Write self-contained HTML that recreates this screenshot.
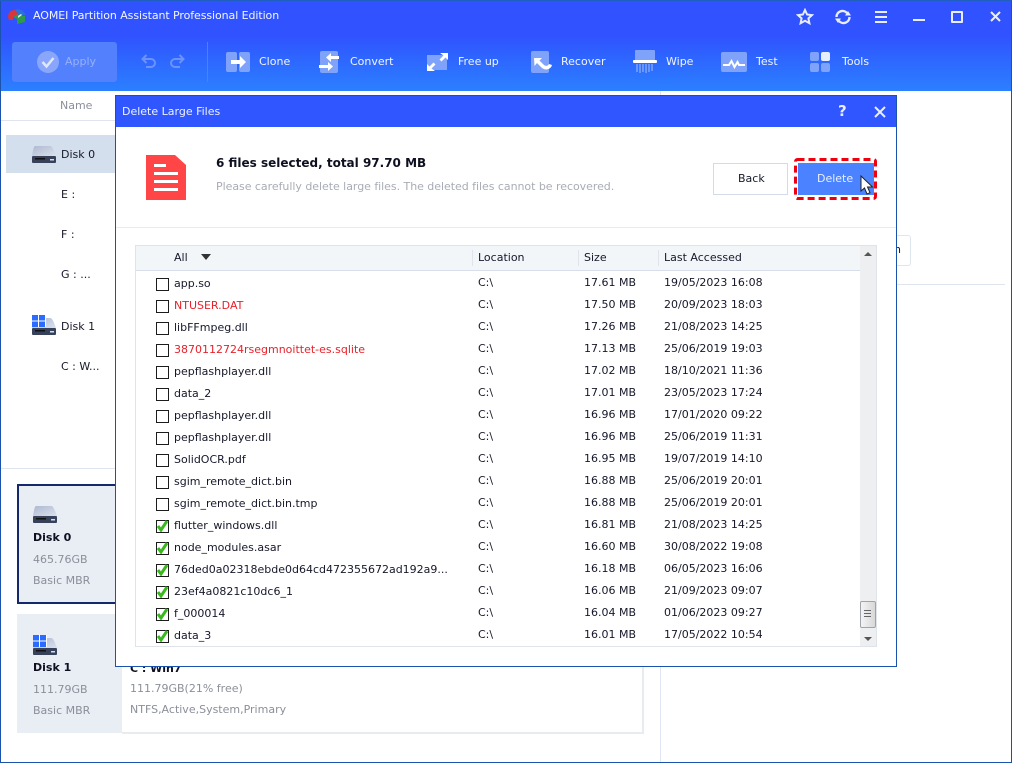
<!DOCTYPE html>
<html><head><meta charset="utf-8"><style>
html,body{margin:0;padding:0;background:#fff}
#w{position:relative;width:1012px;height:763px;overflow:hidden;background:#fff;font-family:"DejaVu Sans","Liberation Sans",sans-serif;font-size:11px;color:#16182a}
#w div,#w svg,#w span.a{position:absolute}
.t{white-space:nowrap;line-height:14px}
.tb{color:#f0f5ff;font-size:11px}
.r{left:136px;width:724px;height:22px}
.r .cb{left:20px;top:6px;width:11px;height:11px;border:1px solid #1c1c1c;background:#fff}
.r svg{left:20px;top:4px}
.r .n,.r .l,.r .s,.r .d{top:4px;white-space:nowrap;line-height:14px;font-size:11px}
.r .n{left:38px;top:5px}.r .l{left:342px}.r .s{left:448px}.r .d{left:528px}
.red{color:#e8212a}
.g{color:#8b8f99;font-size:11px}
</style></head><body><div id="w">
<!-- title bar -->
<div style="left:0;top:0;width:1012px;height:91px;background:linear-gradient(#3052ff 0,#3052ff 35px,#2b80ff 91px)"></div>
<svg style="left:7px;top:8px" width="20" height="17" viewBox="0 0 20 17"><path d="M1 9C1 5 4 2 8 2l3 4-5 3v3H2z" fill="#d9353a"/><path d="M8 2c2-1 6-1 8 1l3 4-6 1-2-2z" fill="#2a72d8"/><path d="M11 6l2 2h5v6l-8 2v-5l-4-2z" fill="#2e9a4c"/><path d="M11 8l3-2 1 1-4 3z" fill="#d8f0e0"/></svg>
<div class="t" style="left:33px;top:9px;color:#f2f6ff;font-size:11px;letter-spacing:-.08px">AOMEI Partition Assistant Professional Edition</div>
<!-- window controls -->
<svg style="left:796px;top:8px" width="18" height="18" viewBox="0 0 18 18"><path d="M9 2l2.100 4.500 4.900.6-3.600 3.300 1 4.800L9 12.800 4.600 15.200l1-4.800L2 7.100l4.900-.6z" fill="none" stroke="#e8eeff" stroke-width="2"/></svg>
<svg style="left:834px;top:8px" width="18" height="18" viewBox="0 0 18 18"><path d="M2.500 9A6 6 0 0 1 13 5M15.500 9A6 6 0 0 1 5 13" fill="none" stroke="#e8eeff" stroke-width="2.400"/><path d="M11 7.500h6L14 3zM7 10.500H1L4 15z" fill="#e8eeff"/></svg>
<div style="left:875px;top:11px;width:12px;height:2px;background:#e8eeff"></div>
<div style="left:875px;top:16px;width:12px;height:2px;background:#e8eeff"></div>
<div style="left:875px;top:21px;width:12px;height:2px;background:#e8eeff"></div>
<div style="left:913px;top:19px;width:12px;height:2px;background:#e8eeff"></div>
<div style="left:951px;top:11px;width:8px;height:8px;border:2px solid #e8eeff;border-radius:1px"></div>
<svg style="left:989px;top:10px" width="13" height="13" viewBox="0 0 13 13"><path d="M2 2l9 9M11 2l-9 9" stroke="#e8eeff" stroke-width="2"/></svg>
<!-- toolbar -->
<div style="left:12px;top:42px;width:105px;height:40px;border-radius:3px;background:#5380fc"></div>
<svg style="left:37px;top:51px" width="22" height="22" viewBox="0 0 22 22"><circle cx="11" cy="11" r="11" fill="#8aa6fb"/><path d="M5.500 11l4 4.500 7-8.500" fill="none" stroke="#dfe7ff" stroke-width="2.500"/></svg>
<div class="t" style="left:65px;top:55px;color:#98b0fc;font-size:11px">Apply</div>
<svg style="left:141px;top:54px" width="44" height="15" viewBox="0 0 44 15"><path d="M2 5h8a4 4 0 0 1 0 8H5M5.500 1L1.500 5l4 4" fill="none" stroke="#6d92fb" stroke-width="2"/><path d="M42 5h-8a4 4 0 0 0 0 8h5M38.500 1l4 4-4 4" fill="none" stroke="#6d92fb" stroke-width="2"/></svg>
<div style="left:207px;top:42px;width:1px;height:40px;background:#4f80fb"></div>
<!-- clone -->
<svg style="left:226px;top:51px" width="25" height="22" viewBox="0 0 25 22"><rect x="0" y="1" width="11" height="20" rx="2" fill="#7fa3fb"/><rect x="13" y="1" width="11" height="20" rx="2" fill="#7fa3fb"/><path d="M5 9h9V5l6 6-6 6v-4H5z" fill="#fff"/></svg>
<div class="t tb" style="left:259px;top:55px">Clone</div>
<!-- convert -->
<svg style="left:319px;top:50px" width="21" height="24" viewBox="0 0 21 24"><rect x="1" y="1" width="18" height="22" rx="2" fill="#7fa3fb"/><path d="M20 6H12V3L7 7.500 12 12V9h8zM0 15h9v-3l5 4.500L9 21v-3H0z" fill="#fff"/></svg>
<div class="t tb" style="left:350px;top:55px">Convert</div>
<!-- free up -->
<svg style="left:426px;top:52px" width="23" height="20" viewBox="0 0 23 20"><rect x="1" y="3" width="20" height="15" fill="#7fa3fb"/><path d="M14 1h8v7l-2.500-2.500-4 4-2-2 4-4zM9 19H1v-7l2.500 2.500 4-4 2 2-4 4z" fill="#fff"/></svg>
<div class="t tb" style="left:458px;top:55px">Free up</div>
<!-- recover -->
<svg style="left:531px;top:51px" width="22" height="22" viewBox="0 0 22 22"><rect x="0" y="0" width="18" height="22" rx="2" fill="#7fa3fb"/><path d="M3 7h8L8.500 9.500 13 14c2 1.500 4 1 5-1l3 1c-1 4-6 6-10 3L6 12 3.500 15z" fill="#fff"/></svg>
<div class="t tb" style="left:561px;top:55px">Recover</div>
<!-- wipe -->
<svg style="left:633px;top:50px" width="25" height="24" viewBox="0 0 25 24"><rect x="2" y="0" width="20" height="11" rx="1" fill="#7fa3fb"/><rect x="0" y="10" width="24" height="3" rx="1" fill="#fff"/><path d="M4 14v8M7 14v9M10 14v8M13 14v9M16 14v8M19 14v7" stroke="#7fa3fb" stroke-width="1.500"/></svg>
<div class="t tb" style="left:666px;top:55px">Wipe</div>
<!-- test -->
<svg style="left:721px;top:52px" width="26" height="20" viewBox="0 0 26 20"><rect width="26" height="20" rx="2" fill="#7fa3fb"/><path d="M2 13h6l2.500-4 3 6 3-5 1.500 3h6" fill="none" stroke="#fff" stroke-width="2"/></svg>
<div class="t tb" style="left:756px;top:55px">Test</div>
<!-- tools -->
<div style="left:810px;top:52px;width:9px;height:9px;border-radius:2px;background:#7fa3fb"></div>
<div style="left:821px;top:52px;width:9px;height:9px;border-radius:2px;background:#e6edfd"></div>
<div style="left:810px;top:63px;width:9px;height:9px;border-radius:2px;background:#7fa3fb"></div>
<div style="left:821px;top:63px;width:9px;height:9px;border-radius:2px;background:#7fa3fb"></div>
<div class="t tb" style="left:842px;top:55px">Tools</div>
<!-- outer window border -->
<div style="left:0;top:0;width:1px;height:763px;background:#1a52ad"></div>
<div style="left:1011px;top:0;width:1px;height:763px;background:#1a52ad"></div>
<div style="left:0;top:762px;width:1012px;height:1px;background:#1a52ad"></div>
<div style="left:0;top:0;width:1012px;height:1px;background:#1f5fc0"></div>
<!-- left pane -->
<div class="t" style="left:60px;top:99px;color:#8b8f99;font-size:11px">Name</div>
<div style="left:1px;top:120px;width:114px;height:1px;background:#dfe5ef"></div>
<div style="left:6px;top:135px;width:109px;height:38px;background:#d4dfee"></div>
<svg style="left:32px;top:146px" width="24" height="18" viewBox="0 0 24 18"><defs><linearGradient id="dg" x1="0" y1="0" x2="1" y2="1"><stop offset="0" stop-color="#aeb8d0"/><stop offset="1" stop-color="#dbe1ee"/></linearGradient></defs><path d="M3 0h15c2 0 3 2 6 10H0C1 3 2 0 3 0z" fill="url(#dg)"/><rect y="10" width="24" height="7" rx="1" fill="#37415a"/><rect x="3" y="12" width="10" height="1.500" fill="#111"/><rect x="18" y="13" width="4" height="1.500" fill="#cfe0f5"/></svg>
<div class="t" style="left:61px;top:148px">Disk 0</div>
<div class="t" style="left:61px;top:188px">E :</div>
<div class="t" style="left:61px;top:228px">F :</div>
<div class="t" style="left:61px;top:268px">G : ...</div>
<svg style="left:32px;top:315px" width="24" height="21" viewBox="0 0 24 21"><path d="M3 3h15c2 0 3 2 6 10H0C1 6 2 3 3 3z" fill="url(#dg)"/><rect y="13" width="24" height="7" rx="1" fill="#37415a"/><rect x="3" y="15" width="10" height="1.500" fill="#111"/><rect x="18" y="16" width="4" height="1.500" fill="#cfe0f5"/><rect x="0" y="0" width="14" height="12" fill="#fff"/><path d="M0 0h6v5.500H0zM7 0h6v5.500H7zM0 6.500h6V12H0zM7 6.500h6V12H7z" fill="#2b6bff"/></svg>
<div class="t" style="left:61px;top:320px">Disk 1</div>
<div class="t" style="left:61px;top:360px">C : W...</div>
<div style="left:1px;top:468px;width:114px;height:1px;background:#dfe5ef"></div>
<!-- divider right -->
<div style="left:660px;top:91px;width:1px;height:671px;background:#dfe5f4"></div>
<div style="left:897px;top:284px;width:108px;height:1px;background:#dfe5ef"></div>
<div style="left:880px;top:235px;width:29px;height:29px;border:1px solid #dfe5ef;border-radius:3px;background:#fff"></div>
<div class="t" style="left:894px;top:243px">n</div>
<!-- cards -->
<div style="left:17px;top:484px;width:110px;height:116px;border:2px solid #14296b;background:#e9edf4"></div>
<svg style="left:33px;top:506px" width="24" height="18" viewBox="0 0 24 18"><path d="M3 0h15c2 0 3 2 6 10H0C1 3 2 0 3 0z" fill="url(#dg)"/><rect y="10" width="24" height="7" rx="1" fill="#37415a"/><rect x="3" y="12" width="10" height="1.500" fill="#111"/><rect x="18" y="13" width="4" height="1.500" fill="#cfe0f5"/></svg>
<div class="t" style="left:33px;top:531px;font-weight:bold;font-size:11px;color:#0e1020">Disk 0</div>
<div class="t g" style="left:33px;top:553px">465.76GB</div>
<div class="t g" style="left:33px;top:574px">Basic MBR</div>
<div style="left:17px;top:614px;width:105px;height:119px;background:#e9edf4"></div>
<div style="left:122px;top:614px;width:520px;height:118px;background:#fff;border-right:2px solid #e8ecf1;border-bottom:2px solid #e8ecf1;box-sizing:content-box"></div>
<svg style="left:33px;top:635px" width="24" height="21" viewBox="0 0 24 21"><path d="M3 3h15c2 0 3 2 6 10H0C1 6 2 3 3 3z" fill="url(#dg)"/><rect y="13" width="24" height="7" rx="1" fill="#37415a"/><rect x="3" y="15" width="10" height="1.500" fill="#111"/><rect x="18" y="16" width="4" height="1.500" fill="#cfe0f5"/><rect x="0" y="0" width="14" height="12" fill="#fff"/><path d="M0 0h6v5.500H0zM7 0h6v5.500H7zM0 6.500h6V12H0zM7 6.500h6V12H7z" fill="#2b6bff"/></svg>
<div class="t" style="left:33px;top:661px;font-weight:bold;font-size:11px;color:#0e1020">Disk 1</div>
<div class="t g" style="left:33px;top:683px">111.79GB</div>
<div class="t g" style="left:33px;top:704px">Basic MBR</div>
<div class="t" style="left:130px;top:662px;font-weight:bold;font-size:11px;color:#0e1020">C : Win7</div>
<div class="t g" style="left:130px;top:682px">111.79GB(21% free)</div>
<div class="t g" style="left:130px;top:703px">NTFS,Active,System,Primary</div>
<!-- dialog -->
<div style="left:115px;top:95px;width:780px;height:570px;border:1px solid #1a52ad;background:#fff"></div>
<div style="left:116px;top:96px;width:780px;height:31px;background:#3056ff"></div>
<div class="t" style="left:122px;top:104px;color:#eef3ff;font-size:11px;margin-top:1px">Delete Large Files</div>
<div class="t" style="left:838px;top:103px;color:#e8eeff;font-size:15px;font-weight:bold;line-height:16px">?</div>
<svg style="left:874px;top:106px" width="12" height="12" viewBox="0 0 12 12"><path d="M1 1l10 10M11 1L1 11" stroke="#e8eeff" stroke-width="2"/></svg>
<svg style="left:146px;top:155px" width="40" height="45" viewBox="0 0 40 45"><path d="M0 0h29l11 10v35H0z" fill="#ff4545"/><path d="M8 9h12v3H8zM8 17h24v3H8zM8 25h24v3H8zM8 33h24v3H8z" fill="#fff"/></svg>
<div class="t" style="left:216px;top:156px;font-weight:bold;font-size:12px;color:#0e1020">6 files selected, total 97.70 MB</div>
<div class="t" style="left:216px;top:180px;color:#a8acb4;font-size:11px;letter-spacing:-.04px">Please carefully delete large files. The deleted files cannot be recovered.</div>
<div style="left:713px;top:163px;width:73px;height:30px;border:1px solid #d3dbe8;background:#fff"></div>
<div class="t" style="left:738px;top:172px;font-size:11px">Back</div>
<div style="left:798px;top:163px;width:76px;height:32px;background:#4a82ff"></div>
<div class="t" style="left:817px;top:172px;color:#e8efff;font-size:11px">Delete</div>
<svg style="left:794px;top:158px" width="83" height="42" viewBox="0 0 83 42"><rect x="1.500" y="1.500" width="80" height="39" rx="2" fill="none" stroke="#f0000f" stroke-width="3" stroke-dasharray="7 4"/></svg>
<svg style="left:860px;top:175px" width="14" height="21" viewBox="0 0 14 21"><path d="M1 1v15l3.500-3 2.500 6 3-1.300-2.500-5.700H12.500z" fill="#fff" stroke="#222" stroke-width="1"/></svg>
<div style="left:116px;top:227px;width:780px;height:1px;background:#e8ebf3"></div>
<!-- table -->
<div style="left:135px;top:245px;width:742px;height:402px;border:1px solid #dfe3ec;box-sizing:border-box;background:#fff"></div>
<div style="left:136px;top:246px;width:724px;height:24px;background:#f3f6f9;border-bottom:1px solid #d9dfea"></div>
<div class="t" style="left:174px;top:251px;font-size:11px">All</div>
<div style="left:201px;top:254px;width:0;height:0;border-left:5px solid transparent;border-right:5px solid transparent;border-top:6px solid #333"></div>
<div style="left:472px;top:250px;width:1px;height:16px;background:#e0e4ec"></div>
<div class="t" style="left:478px;top:251px;font-size:11px">Location</div>
<div style="left:578px;top:250px;width:1px;height:16px;background:#e0e4ec"></div>
<div class="t" style="left:584px;top:251px;font-size:11px">Size</div>
<div style="left:658px;top:250px;width:1px;height:16px;background:#e0e4ec"></div>
<div class="t" style="left:664px;top:251px;font-size:11px">Last Accessed</div>
<!-- scrollbar -->
<div style="left:860px;top:246px;width:16px;height:400px;background:#eeeff1"></div>
<div style="left:864px;top:252px;width:0;height:0;border-left:4px solid transparent;border-right:4px solid transparent;border-bottom:4px solid #555"></div>
<div style="left:860px;top:601px;width:14px;height:25px;border:1px solid #a0a4aa;border-radius:2px;background:linear-gradient(90deg,#f4f4f4,#d8d8d8)"></div>
<div style="left:864px;top:610px;width:7px;height:1px;background:#666"></div>
<div style="left:864px;top:613px;width:7px;height:1px;background:#666"></div>
<div style="left:864px;top:616px;width:7px;height:1px;background:#666"></div>
<div style="left:864px;top:637px;width:0;height:0;border-left:4px solid transparent;border-right:4px solid transparent;border-top:4px solid #555"></div>
<!-- rows -->
<div class="r" style="top:272px"><div class="cb"></div><div class="n">app.so</div><div class="l">C:\</div><div class="s">17.61 MB</div><div class="d">19/05/2023 16:08</div></div>
<div class="r" style="top:294px"><div class="cb"></div><div class="n red">NTUSER.DAT</div><div class="l">C:\</div><div class="s">17.50 MB</div><div class="d">20/09/2023 18:03</div></div>
<div class="r" style="top:316px"><div class="cb"></div><div class="n">libFFmpeg.dll</div><div class="l">C:\</div><div class="s">17.26 MB</div><div class="d">21/08/2023 14:25</div></div>
<div class="r" style="top:338px"><div class="cb"></div><div class="n red">3870112724rsegmnoittet-es.sqlite</div><div class="l">C:\</div><div class="s">17.13 MB</div><div class="d">25/06/2019 19:03</div></div>
<div class="r" style="top:360px"><div class="cb"></div><div class="n">pepflashplayer.dll</div><div class="l">C:\</div><div class="s">17.02 MB</div><div class="d">18/10/2021 11:36</div></div>
<div class="r" style="top:382px"><div class="cb"></div><div class="n">data_2</div><div class="l">C:\</div><div class="s">17.01 MB</div><div class="d">23/05/2023 17:24</div></div>
<div class="r" style="top:404px"><div class="cb"></div><div class="n">pepflashplayer.dll</div><div class="l">C:\</div><div class="s">16.96 MB</div><div class="d">17/01/2020 09:22</div></div>
<div class="r" style="top:426px"><div class="cb"></div><div class="n">pepflashplayer.dll</div><div class="l">C:\</div><div class="s">16.96 MB</div><div class="d">25/06/2019 11:31</div></div>
<div class="r" style="top:448px"><div class="cb"></div><div class="n">SolidOCR.pdf</div><div class="l">C:\</div><div class="s">16.95 MB</div><div class="d">19/07/2019 14:10</div></div>
<div class="r" style="top:470px"><div class="cb"></div><div class="n">sgim_remote_dict.bin</div><div class="l">C:\</div><div class="s">16.88 MB</div><div class="d">25/06/2019 20:01</div></div>
<div class="r" style="top:492px"><div class="cb"></div><div class="n">sgim_remote_dict.bin.tmp</div><div class="l">C:\</div><div class="s">16.88 MB</div><div class="d">25/06/2019 20:01</div></div>
<div class="r" style="top:514px"><div class="cb"></div><svg width="13" height="14" viewBox="0 0 13 14"><path d="M2 8l3 4L11 3" fill="none" stroke="#39b81e" stroke-width="3"/></svg><div class="n">flutter_windows.dll</div><div class="l">C:\</div><div class="s">16.81 MB</div><div class="d">21/08/2023 14:25</div></div>
<div class="r" style="top:536px"><div class="cb"></div><svg width="13" height="14" viewBox="0 0 13 14"><path d="M2 8l3 4L11 3" fill="none" stroke="#39b81e" stroke-width="3"/></svg><div class="n">node_modules.asar</div><div class="l">C:\</div><div class="s">16.60 MB</div><div class="d">30/08/2022 19:08</div></div>
<div class="r" style="top:558px"><div class="cb"></div><svg width="13" height="14" viewBox="0 0 13 14"><path d="M2 8l3 4L11 3" fill="none" stroke="#39b81e" stroke-width="3"/></svg><div class="n">76ded0a02318ebde0d64cd472355672ad192a9...</div><div class="l">C:\</div><div class="s">16.18 MB</div><div class="d">06/05/2023 16:06</div></div>
<div class="r" style="top:580px"><div class="cb"></div><svg width="13" height="14" viewBox="0 0 13 14"><path d="M2 8l3 4L11 3" fill="none" stroke="#39b81e" stroke-width="3"/></svg><div class="n">23ef4a0821c10dc6_1</div><div class="l">C:\</div><div class="s">16.06 MB</div><div class="d">21/09/2023 09:07</div></div>
<div class="r" style="top:602px"><div class="cb"></div><svg width="13" height="14" viewBox="0 0 13 14"><path d="M2 8l3 4L11 3" fill="none" stroke="#39b81e" stroke-width="3"/></svg><div class="n">f_000014</div><div class="l">C:\</div><div class="s">16.04 MB</div><div class="d">01/06/2023 09:27</div></div>
<div class="r" style="top:624px"><div class="cb"></div><svg width="13" height="14" viewBox="0 0 13 14"><path d="M2 8l3 4L11 3" fill="none" stroke="#39b81e" stroke-width="3"/></svg><div class="n">data_3</div><div class="l">C:\</div><div class="s">16.01 MB</div><div class="d">17/05/2022 10:54</div></div>
</div></body></html>
